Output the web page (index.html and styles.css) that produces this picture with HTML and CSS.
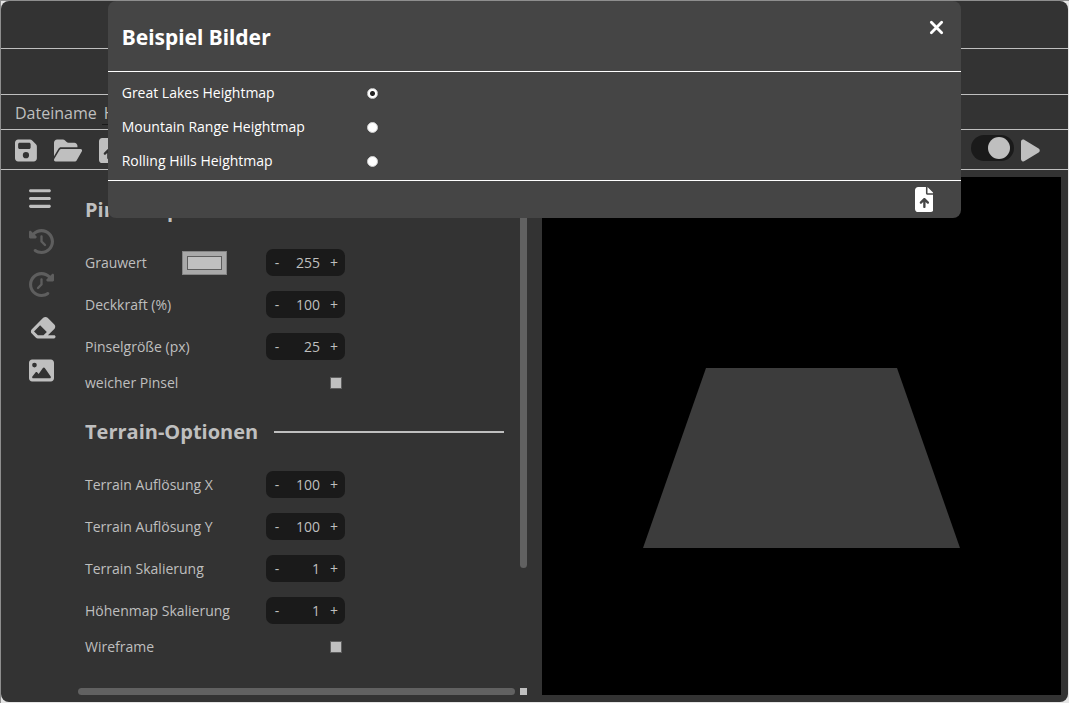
FILE: index.html
```html
<!DOCTYPE html>
<html lang="de">
<head>
<meta charset="utf-8">
<meta name="viewport" content="width=device-width, initial-scale=1">
<title>Heightmap Editor</title>
<link rel="stylesheet" href="styles.css">
</head>
<body>
<div class="window">
  <header class="bar bar-title"></header>
  <nav class="bar bar-menu"></nav>
  <div class="bar bar-file">
    <label for="filename">Dateiname</label>
    <input class="filename" id="filename" type="text" value="Heightmap">
  </div>
  <div class="bar toolbar">
    <button class="tool" aria-label="Speichern"><svg class="icon" viewBox="0 0 448 512"><path fill-rule="evenodd" d="M64 32C28.700 32 0 60.700 0 96V416c0 35.300 28.700 64 64 64H384c35.300 0 64-28.700 64-64V173.300c0-17-6.700-33.300-18.700-45.300L352 50.700C340 38.700 323.700 32 306.700 32H64zm0 96c0-17.700 14.300-32 32-32H288c17.700 0 32 14.300 32 32v64c0 17.700-14.300 32-32 32H96c-17.700 0-32-14.300-32-32V128zM224 288a64 64 0 1 1 0 128 64 64 0 1 1 0-128z"/></svg></button>
    <button class="tool" aria-label="Öffnen"><svg class="icon" viewBox="0 0 576 512"><path d="M88.700 223.800L0 375.800V96C0 60.700 28.700 32 64 32H181.500c17 0 33.300 6.700 45.300 18.700l26.500 26.500c12 12 28.300 18.700 45.300 18.700H416c35.300 0 64 28.700 64 64v32H144c-22.800 0-43.800 12.100-55.300 31.800zm27.600 16.100C122.100 230 132.600 224 144 224H544c11.500 0 22 6.100 27.700 16.100s5.700 22.200-.1 32.100l-112 192C453.900 474 443.400 480 432 480H32c-11.500 0-22-6.100-27.700-16.100s-5.700-22.200 .1-32.100l112-192z"/></svg></button>
    <button class="tool" aria-label="Beispiel laden"><svg class="icon" viewBox="0 0 384 512"><use href="#file-up"/></svg></button>
    <span class="spacer"></span>
    <input class="toggle" type="checkbox" checked aria-label="Live-Vorschau">
    <button class="tool" aria-label="Start"><svg class="icon" viewBox="0 0 384 512"><path d="M73 39c-14.800-9.100-33.400-9.400-48.500-.9S0 62.600 0 80V432c0 17.400 9.400 33.400 24.500 41.900s33.700 8.100 48.500-.9L361 297c14.300-8.700 23-24.200 23-41s-8.700-32.200-23-41L73 39z"/></svg></button>
  </div>

  <main class="work">
    <aside class="side">
      <button class="tool side-tool" aria-label="Menü"><svg class="icon" viewBox="0 0 448 512"><path d="M0 96C0 78.300 14.300 64 32 64H416c17.700 0 32 14.300 32 32s-14.300 32-32 32H32C14.300 128 0 113.700 0 96zM0 256c0-17.700 14.300-32 32-32H416c17.700 0 32 14.300 32 32s-14.300 32-32 32H32c-17.700 0-32-14.300-32-32zM448 416c0 17.700-14.300 32-32 32H32c-17.700 0-32-14.300-32-32s14.300-32 32-32H416c17.700 0 32 14.300 32 32z"/></svg></button>
      <button class="tool side-tool" disabled aria-label="Rückgängig"><svg class="icon" viewBox="0 0 512 512"><use href="#history"/></svg></button>
      <button class="tool side-tool" disabled aria-label="Wiederholen"><svg class="icon" viewBox="0 0 512 512"><use href="#history" transform="translate(512 0) scale(-1 1)"/></svg></button>
      <button class="tool side-tool" aria-label="Radierer"><svg class="icon" viewBox="0 0 576 512"><path d="M290.700 57.400L57.400 290.700c-25 25-25 65.500 0 90.500l80 80c12 12 28.300 18.700 45.300 18.700H288h9.400H512c17.700 0 32-14.300 32-32s-14.300-32-32-32H387.900L518.600 285.300c25-25 25-65.500 0-90.500L381.300 57.400c-25-25-65.500-25-90.500 0zM297.400 416H288l-105.400 0-80-80L227.300 211.300 364.700 348.700 297.400 416z"/></svg></button>
      <button class="tool side-tool" aria-label="Bild"><svg class="icon" viewBox="0 0 512 512"><path fill-rule="evenodd" d="M0 96C0 60.700 28.700 32 64 32H448c35.300 0 64 28.700 64 64V416c0 35.300-28.700 64-64 64H64c-35.300 0-64-28.700-64-64V96zM323.800 202.500c-4.500-6.600-11.900-10.500-19.800-10.500s-15.400 3.900-19.800 10.500l-87 127.600L170.700 297c-4.600-5.700-11.500-9-18.700-9s-14.200 3.300-18.700 9l-64 80c-5.800 7.200-6.900 17.100-2.900 25.400s12.400 13.600 21.600 13.600h96 32H424c8.900 0 17.100-4.900 21.200-12.800s3.600-17.400-1.400-24.700l-120-176zM112 192a48 48 0 1 0 0-96 48 48 0 1 0 0 96z"/></svg></button>
    </aside>

    <section class="panel">
      <div class="options">
        <h2 class="group-title">Pinsel-Optionen</h2>
        <div class="group">
          <div class="row">
            <label class="name" for="gray">Grauwert</label>
            <input class="swatch" type="color" value="#c0c0c0" aria-label="Farbe">
            <div class="stepper"><button class="step">-</button><input class="num" id="gray" type="text" value="255"><button class="step">+</button></div>
          </div>
          <div class="row">
            <label class="name" for="opacity">Deckkraft (%)</label>
            <div class="stepper"><button class="step">-</button><input class="num" id="opacity" type="text" value="100"><button class="step">+</button></div>
          </div>
          <div class="row">
            <label class="name" for="size">Pinselgröße (px)</label>
            <div class="stepper"><button class="step">-</button><input class="num" id="size" type="text" value="25"><button class="step">+</button></div>
          </div>
          <div class="row row-check">
            <label class="name" for="soft">weicher Pinsel</label>
            <input class="check" id="soft" type="checkbox">
          </div>
        </div>
        <h2 class="group-title">Terrain-Optionen</h2>
        <div class="group">
          <div class="row">
            <label class="name" for="resx">Terrain Auflösung X</label>
            <div class="stepper"><button class="step">-</button><input class="num" id="resx" type="text" value="100"><button class="step">+</button></div>
          </div>
          <div class="row">
            <label class="name" for="resy">Terrain Auflösung Y</label>
            <div class="stepper"><button class="step">-</button><input class="num" id="resy" type="text" value="100"><button class="step">+</button></div>
          </div>
          <div class="row">
            <label class="name" for="scale">Terrain Skalierung</label>
            <div class="stepper"><button class="step">-</button><input class="num" id="scale" type="text" value="1"><button class="step">+</button></div>
          </div>
          <div class="row">
            <label class="name" for="hscale">Höhenmap Skalierung</label>
            <div class="stepper"><button class="step">-</button><input class="num" id="hscale" type="text" value="1"><button class="step">+</button></div>
          </div>
          <div class="row row-check">
            <label class="name" for="wire">Wireframe</label>
            <input class="check" id="wire" type="checkbox">
          </div>
        </div>
      </div>
      <div class="track-y"><div class="thumb-y"></div></div>
      <div class="thumb-x"></div>
      <div class="corner"></div>
    </section>

    <section class="preview" aria-label="Vorschau">
      <svg class="scene" viewBox="0 0 519 518"><polygon points="164,191 355,191 418,371 101,371"/></svg>
    </section>
  </main>

  <dialog class="dialog" open aria-labelledby="dialog-title">
    <div class="dialog-head">
      <h1 class="dialog-title" id="dialog-title">Beispiel Bilder</h1>
      <button class="close" aria-label="Schließen"><svg class="icon" viewBox="0 0 16 16"><path class="cross" d="M2.500 2.500L13.500 13.500M13.500 2.500L2.500 13.500"/></svg></button>
    </div>
    <div class="dialog-body">
      <div class="choice"><label for="lakes">Great Lakes Heightmap</label><input class="radio" type="radio" name="sample" id="lakes" checked></div>
      <div class="choice"><label for="mountain">Mountain Range Heightmap</label><input class="radio" type="radio" name="sample" id="mountain"></div>
      <div class="choice"><label for="hills">Rolling Hills Heightmap</label><input class="radio" type="radio" name="sample" id="hills"></div>
    </div>
    <div class="dialog-foot">
      <button class="tool upload" aria-label="Laden"><svg class="icon" viewBox="0 0 384 512"><use href="#file-up"/></svg></button>
    </div>
  </dialog>
</div>

<svg class="defs" aria-hidden="true">
  <defs>
    <path id="file-up" fill-rule="evenodd" d="M64 0C28.700 0 0 28.700 0 64V448c0 35.300 28.700 64 64 64H320c35.300 0 64-28.700 64-64V160H256c-17.700 0-32-14.300-32-32V0H64zM256 0V128H384L256 0zM216 408c0 13.300-10.700 24-24 24s-24-10.700-24-24V305.900l-31 31c-9.400 9.400-24.600 9.400-33.900 0s-9.400-24.600 0-33.900l72-72c9.400-9.400 24.600-9.400 33.900 0l72 72c9.400 9.400 9.400 24.600 0 33.900s-24.600 9.400-33.900 0l-31-31V408z"/>
    <path id="history" d="M75 75L41 41C25.900 25.900 0 36.600 0 57.900V168c0 13.300 10.700 24 24 24H134.100c21.400 0 32.100-25.900 17-41l-30.800-30.800C155 85.500 203 64 256 64c106 0 192 86 192 192s-86 192-192 192c-40.800 0-78.600-12.700-109.700-34.400c-14.500-10.100-34.400-6.600-44.600 7.900s-6.600 34.400 7.900 44.600C151.200 495 201.700 512 256 512c141.400 0 256-114.600 256-256S397.400 0 256 0C185.300 0 121.300 28.700 75 75zm181 53c-13.300 0-24 10.700-24 24V256c0 6.400 2.500 12.500 7 17l72 72c9.400 9.400 24.600 9.400 33.900 0s9.400-24.600 0-33.900l-65-65V152c0-13.300-10.700-24-24-24z"/>
  </defs>
</svg>
</body>
</html>
```
FILE: styles.css
```css
* {
  box-sizing: border-box;
}

body {
  display: flex;
  min-height: 100vh;
  margin: 0;
  padding: 0 1px 1px 0;
  border-top: 1px solid #8e8e8e;
  border-left: 1px solid #8e8e8e;
  background: #e6e6e6;
  color: #bfbfbf;
  font: 14px/20px "Open Sans", "Noto Sans", sans-serif;
}

button,
input {
  margin: 0;
  padding: 0;
  border: 0;
  background: none;
  color: inherit;
  font: inherit;
}

.defs {
  position: absolute;
  width: 0;
  height: 0;
}

.icon {
  display: block;
  height: 100%;
  fill: currentColor;
}

.window {
  position: relative;
  display: flex;
  flex: 1;
  flex-direction: column;
  min-width: 0;
  border-radius: 8px;
  background: #333;
}

.bar {
  display: flex;
  align-items: center;
  border-bottom: 1px solid #bfbfbf;
}

.bar-title {
  height: 48px;
}

.bar-menu {
  height: 46px;
}

.bar-file {
  gap: 5px;
  height: 35px;
  padding: 2px 0 0 14px;
  font-size: 16px;
}

.filename {
  width: 160px;
  height: 24px;
  padding-left: 2px;
  border-bottom: 1px solid #1a1a1a;
}

.toolbar {
  gap: 17px;
  height: 40px;
  padding: 1px 28px 0 14px;
}

.tool {
  display: block;
  height: 25px;
}

.spacer {
  flex: 1;
}

.toggle {
  display: flex;
  align-items: center;
  justify-content: flex-end;
  width: 43px;
  height: 26px;
  margin: 0 -10px 4px 0;
  padding: 0 4px;
  border-radius: 13px;
  background: #1a1a1a;
  appearance: none;
}

.toggle::before {
  width: 22px;
  height: 22px;
  border-radius: 50%;
  background: #bfbfbf;
  content: "";
}

.work {
  display: grid;
  flex: 1;
  grid-template-columns: 77px minmax(0, 464fr) minmax(0, 519fr);
  padding: 7px 7px 7px 0;
}

.side {
  display: flex;
  flex-direction: column;
  align-items: flex-start;
  gap: 18px;
  padding: 9px 0 0 28px;
}

.side-tool:disabled {
  color: #5e5e5e;
}

.panel {
  display: grid;
  grid-template-columns: minmax(0, 1fr) 7px;
  grid-template-rows: 1fr 7px;
  column-gap: 5px;
  margin-right: 15px;
}

.options {
  padding: 18px 11px 0 7px;
}

.group-title {
  display: flex;
  align-items: center;
  gap: 16px;
  margin: 0 0 24px;
  font-size: 20px;
  line-height: 30px;
  white-space: nowrap;
}

.group-title::after {
  flex: 1;
  height: 2px;
  background: #bfbfbf;
  content: "";
}

.group {
  display: flex;
  flex-direction: column;
  gap: 15px;
  margin-bottom: 26px;
}

.group:last-child {
  margin-bottom: 0;
}

.row {
  display: flex;
  align-items: center;
  width: 260px;
  height: 27px;
}

.row-check {
  height: 16px;
  padding-right: 3px;
}

.name {
  width: 97px;
  white-space: nowrap;
}

.swatch {
  width: 45px;
  height: 24px;
  padding: 4px;
  border: 1px solid #858585;
  background: #a9a9a9;
}

.swatch::-webkit-color-swatch-wrapper {
  padding: 0;
}

.swatch::-webkit-color-swatch {
  border: 1px solid #5e5e5e;
}

.stepper {
  display: flex;
  align-items: center;
  width: 79px;
  height: 27px;
  margin-left: auto;
  border-radius: 7px;
  background: #1a1a1a;
}

.step {
  width: 22px;
  line-height: 27px;
}

.num {
  flex: 1;
  min-width: 0;
  padding-right: 3px;
  text-align: right;
}

.check {
  width: 12px;
  height: 12px;
  margin-left: auto;
  border: 1px solid #5e5e5e;
  background: #bfbfbf;
  appearance: none;
}

.thumb-y {
  height: 100%;
  border-radius: 4px;
  background: #616161;
}

.track-y {
  padding-bottom: 120px;
}

.thumb-x {
  border-radius: 4px;
  background: #616161;
}

.corner {
  background: #bfbfbf;
}

.preview {
  contain: size;
  background: #000;
}

.scene {
  display: block;
  width: 100%;
  height: 100%;
  fill: #3c3c3c;
}

.dialog {
  position: absolute;
  top: 0;
  width: 80%;
  margin: 0 auto;
  padding: 0;
  border: 0;
  border-radius: 8px;
  background: #454545;
  color: #fff;
}

.dialog-head {
  display: flex;
  align-items: flex-start;
  justify-content: space-between;
  padding: 19px 17px 17px 14px;
  border-bottom: 1px solid #fff;
}

.dialog-title {
  margin: 0;
  font-family: "Noto Sans", sans-serif;
  font-size: 21px;
  line-height: 34px;
}

.close {
  width: 15px;
  height: 15px;
}

.cross {
  stroke: currentColor;
  stroke-linecap: round;
  stroke-width: 3;
}

.dialog-body {
  display: flex;
  flex-direction: column;
  gap: 14px;
  padding: 11px 14px 9px;
  border-bottom: 1px solid #fff;
}

.choice {
  display: grid;
  grid-template-columns: 245px auto;
  align-items: center;
  justify-content: start;
}

.radio {
  width: 11px;
  height: 11px;
  border: 1px solid #ccc;
  border-radius: 50%;
  background: #fff;
  appearance: none;
}

.radio:checked {
  background: radial-gradient(circle, #222 2px, #fff 3px);
}

.dialog-foot {
  display: flex;
  justify-content: flex-end;
  padding: 6px 28px 6px 14px;
}
```
